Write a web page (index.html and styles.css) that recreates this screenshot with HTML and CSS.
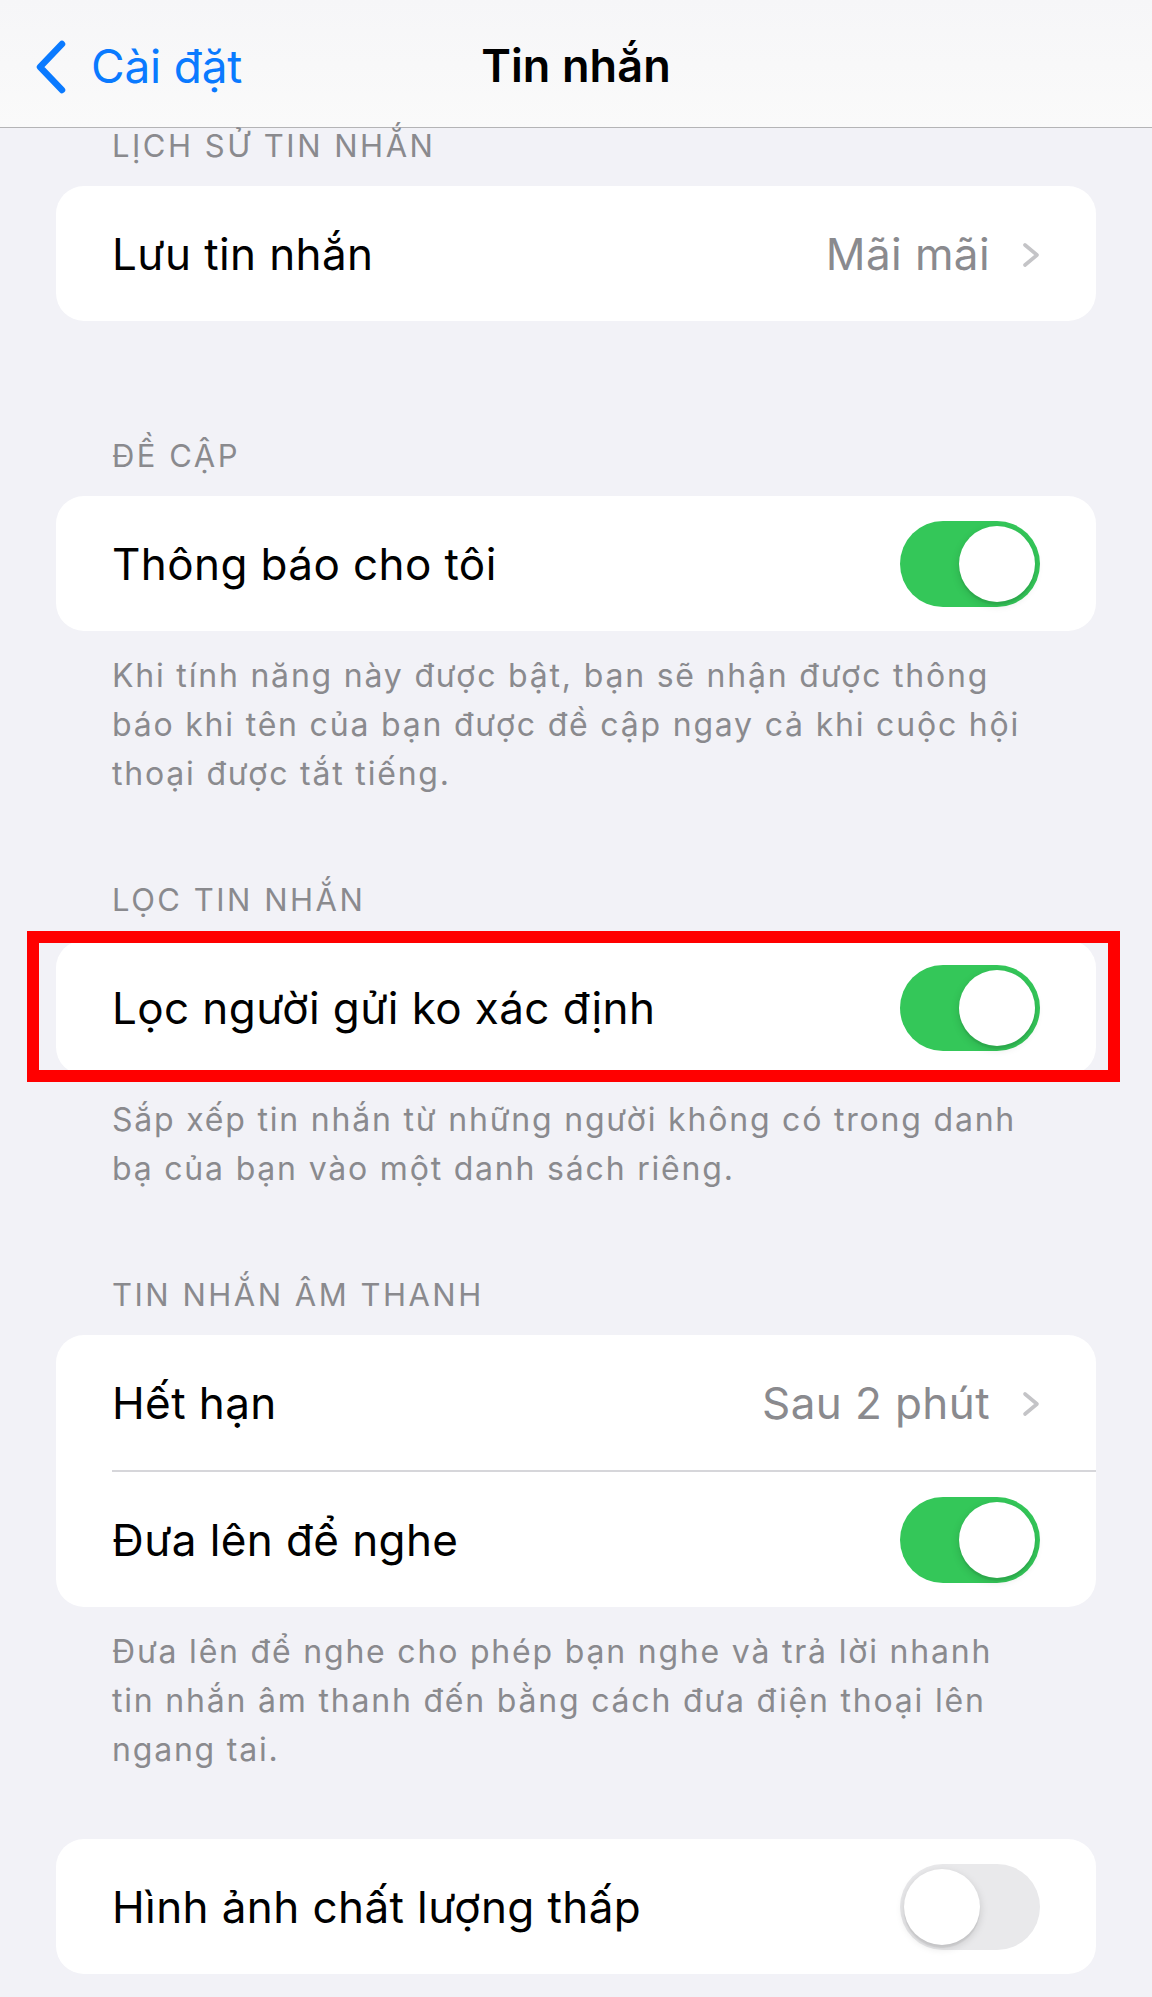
FILE: index.html
```html
<!DOCTYPE html>
<html lang="vi">
<head>
<meta charset="utf-8">
<title>Tin nhắn</title>
<link rel="stylesheet" href="styles.css">
</head>
<body>
  <header class="navbar">
    <a class="nav-back" href="#">
      <svg class="nav-back__icon" width="32" height="54" viewBox="0 0 32 54" aria-hidden="true">
        <polyline points="27,4 5,27 27,50" fill="none" stroke="currentColor" stroke-width="6.5" stroke-linecap="round" stroke-linejoin="round"/>
      </svg>
      <span>Cài đặt</span>
    </a>
    <h1 class="nav-title">Tin nhắn</h1>
    <span class="nav-spacer"></span>
  </header>

  <main class="settings">
    <section class="group group--first">
      <h2 class="group__header">Lịch sử tin nhắn</h2>
      <div class="card">
        <div class="row">
          <span class="row__label">Lưu tin nhắn</span>
          <span class="row__value">Mãi mãi</span>
          <svg class="row__chevron" width="18" height="26" viewBox="0 0 18 26" aria-hidden="true">
            <polyline points="3,3 15,13 3,23" fill="none" stroke="currentColor" stroke-width="3.6" stroke-linecap="round" stroke-linejoin="round"/>
          </svg>
        </div>
      </div>
    </section>

    <section class="group group--after-plain">
      <h2 class="group__header">Đề cập</h2>
      <div class="card">
        <div class="row">
          <span class="row__label">Thông báo cho tôi</span>
          <span class="switch switch--on" role="switch" aria-checked="true"></span>
        </div>
      </div>
      <p class="group__footer">Khi tính năng này được bật, bạn sẽ nhận được thông báo khi tên của bạn được đề cập ngay cả khi cuộc hội thoại được tắt tiếng.</p>
    </section>

    <section class="group">
      <h2 class="group__header">Lọc tin nhắn</h2>
      <div class="card card--marked">
        <div class="row">
          <span class="row__label">Lọc người gửi ko xác định</span>
          <span class="switch switch--on" role="switch" aria-checked="true"></span>
        </div>
        <span class="mark" aria-hidden="true"></span>
      </div>
      <p class="group__footer">Sắp xếp tin nhắn từ những người không có trong danh bạ của bạn vào một danh sách riêng.</p>
    </section>

    <section class="group">
      <h2 class="group__header">Tin nhắn âm thanh</h2>
      <div class="card">
        <div class="row">
          <span class="row__label">Hết hạn</span>
          <span class="row__value">Sau 2 phút</span>
          <svg class="row__chevron" width="18" height="26" viewBox="0 0 18 26" aria-hidden="true">
            <polyline points="3,3 15,13 3,23" fill="none" stroke="currentColor" stroke-width="3.6" stroke-linecap="round" stroke-linejoin="round"/>
          </svg>
        </div>
        <div class="row">
          <span class="row__label">Đưa lên để nghe</span>
          <span class="switch switch--on" role="switch" aria-checked="true"></span>
        </div>
      </div>
      <p class="group__footer">Đưa lên để nghe cho phép bạn nghe và trả lời nhanh tin nhắn âm thanh đến bằng cách đưa điện thoại lên ngang tai.</p>
    </section>

    <section class="group group--headless">
      <div class="card">
        <div class="row">
          <span class="row__label">Hình ảnh chất lượng thấp</span>
          <span class="switch" role="switch" aria-checked="false"></span>
        </div>
      </div>
    </section>
  </main>
</body>
</html>
```

FILE: styles.css
```css
* {
  box-sizing: border-box;
}

html,
body {
  margin: 0;
  padding: 0;
}

body {
  background: #f2f2f7;
  font-family: Inter, "Noto Sans", "Liberation Sans", sans-serif;
  color: #000;
  min-height: 1997px;
  overflow: hidden;
}

/* ---------- navigation bar ---------- */
.navbar {
  height: 128px;
  display: grid;
  grid-template-columns: 1fr auto 1fr;
  align-items: center;
  padding-top: 4px;
  background: linear-gradient(#f6f6f8, #fafafa);
  border-bottom: 1px solid #b4b4b6;
}

.nav-back {
  display: flex;
  align-items: center;
  gap: 24px;
  margin-left: 35px;
  color: #0a7aff;
  text-decoration: none;
  font-size: 46px;
  letter-spacing: -0.2px;
  justify-self: start;
}

.nav-back__icon {
  display: block;
  margin-top: 2px;
}

.nav-title {
  margin: 0;
  font-size: 45px;
  font-weight: 600;
  letter-spacing: 0.1px;
}

/* ---------- grouped list ---------- */
.group {
  margin-top: 84px;
}

.group--first {
  margin-top: 0;
}

.group--after-plain {
  margin-top: 117px;
}

.group--headless {
  margin-top: 65px;
}

.group__header {
  margin: 0 0 22px;
  padding: 0 56px 0 112px;
  font-size: 31px;
  line-height: 36px;
  font-weight: 400;
  color: #8a8a8e;
  text-transform: uppercase;
  letter-spacing: 2.5px;
}

.group__footer {
  margin: 20px 0 0;
  padding: 0 124px 0 112px;
  font-size: 32px;
  line-height: 49px;
  color: #8a8a8e;
  letter-spacing: 1.8px;
}

.card {
  margin: 0 56px;
  background: #fff;
  border-radius: 28px;
}

.card--marked {
  position: relative;
}

/* red annotation frame drawn over the highlighted row */
.mark {
  position: absolute;
  left: -29px;
  right: -24px;
  top: -9px;
  bottom: -7px;
  border: 12px solid #ff0000;
  pointer-events: none;
}

.row {
  height: 135px;
  display: flex;
  align-items: center;
  padding: 0 56px;
  font-size: 44px;
  letter-spacing: 0.4px;
}

.row + .row {
  height: 137px;
  margin-left: 56px;
  padding-left: 0;
  border-top: 2px solid #d6d6da;
}

.row__label {
  flex: 1;
  white-space: nowrap;
}

.row__value {
  color: #8a8a8e;
  margin-right: 32px;
}

.row__chevron {
  display: block;
  color: #c4c4c7;
  margin-top: 2px;
}

/* ---------- switch ---------- */
.switch {
  position: relative;
  flex: none;
  width: 140px;
  height: 86px;
  border-radius: 43px;
  background: #e9e9eb;
}

.switch::after {
  content: "";
  position: absolute;
  top: 5px;
  left: 4px;
  width: 76px;
  height: 76px;
  border-radius: 50%;
  background: #fff;
  box-shadow: 0 3px 8px rgba(0, 0, 0, 0.15), 0 3px 1px rgba(0, 0, 0, 0.06);
}

.switch--on {
  background: #34c759;
}

.switch--on::after {
  left: auto;
  right: 5px;
}
```
